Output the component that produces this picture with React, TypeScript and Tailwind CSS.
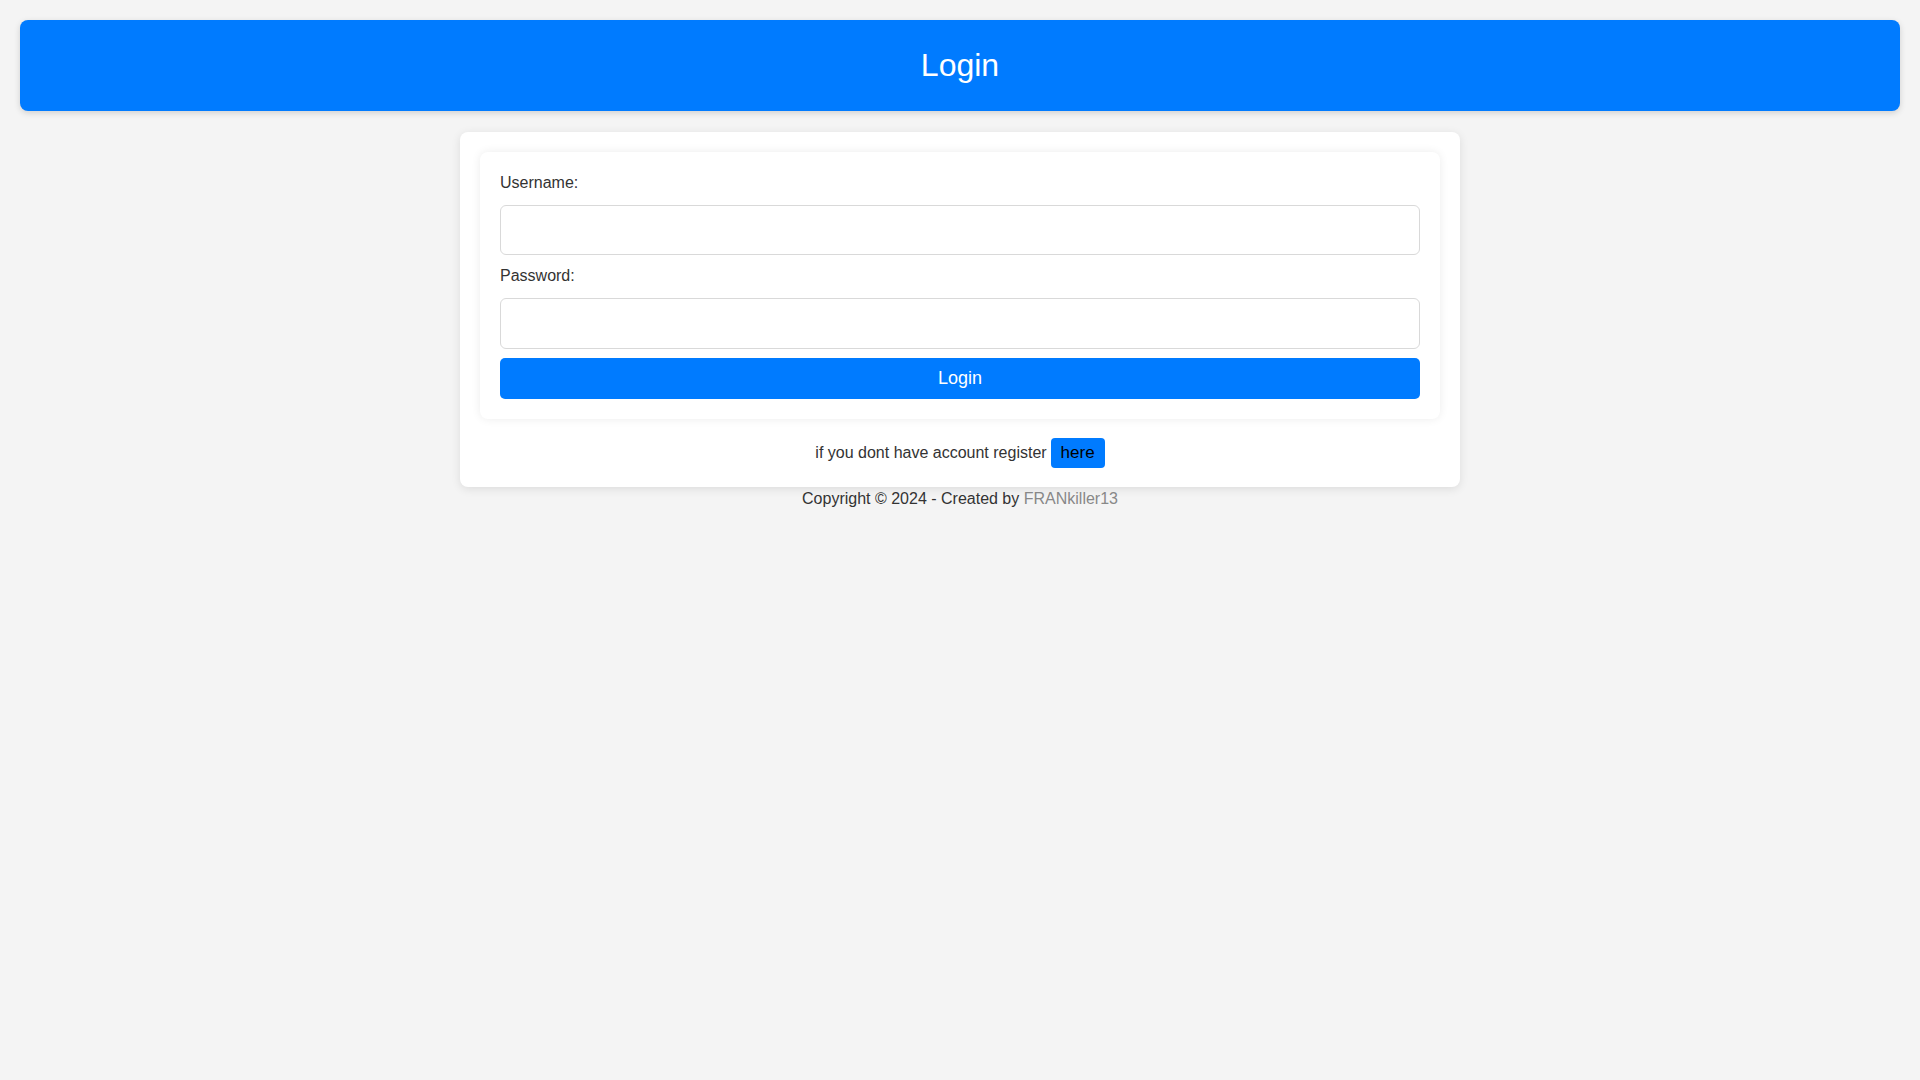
import React from "react";

export default function App() {
  return (
    <div
      className="min-h-screen w-full bg-[#f4f4f4] text-[#333] pt-[20px]"
      style={{ fontFamily: '"Liberation Sans", Arial, sans-serif' }}
    >
      <header className="mx-[20px] h-[91px] rounded-[8px] bg-[#007bff] shadow-[0_2px_6px_rgba(0,0,0,0.15)] flex items-center justify-center">
        <h1 className="text-[32px] leading-[37px] text-white font-normal">Login</h1>
      </header>

      <div className="mx-auto mt-[21px] w-[1000px] rounded-[8px] bg-white p-[20px] pb-[19px] shadow-[0_2px_10px_rgba(0,0,0,0.1)]">
        <div className="rounded-[8px] bg-white px-[20px] pt-[22px] pb-[20px] shadow-[0_0_10px_rgba(0,0,0,0.08)]">
          <label className="block text-[16px] leading-[18px] text-[#333]">Username:</label>
          <input
            type="text"
            className="mt-[13px] block h-[50px] w-full rounded-[6px] border border-[#d9d9d9] bg-white px-[10px] outline-none"
          />
          <label className="mt-[12px] block text-[16px] leading-[18px] text-[#333]">Password:</label>
          <input
            type="password"
            className="mt-[13px] block h-[51px] w-full rounded-[6px] border border-[#d9d9d9] bg-white px-[10px] outline-none"
          />
          <button className="mt-[9px] block h-[41px] w-full rounded-[5px] bg-[#007bff] text-[18px] text-white">
            Login
          </button>
        </div>
        <div className="mt-[19px] flex h-[30px] items-center justify-center text-[16px] text-[#333]">
          <span>if you dont have account register</span>
          <a className="ml-[4px] flex h-[30px] items-center rounded-[4px] bg-[#007bff] px-[10px] text-[17px] text-[#000]">
            here
          </a>
        </div>
      </div>

      <footer className="mt-[3px] text-center text-[16px] leading-[18px] text-[#333]">
        Copyright © 2024 - Created by <span className="text-[#888]">FRANkiller13</span>
      </footer>
    </div>
  );
}
